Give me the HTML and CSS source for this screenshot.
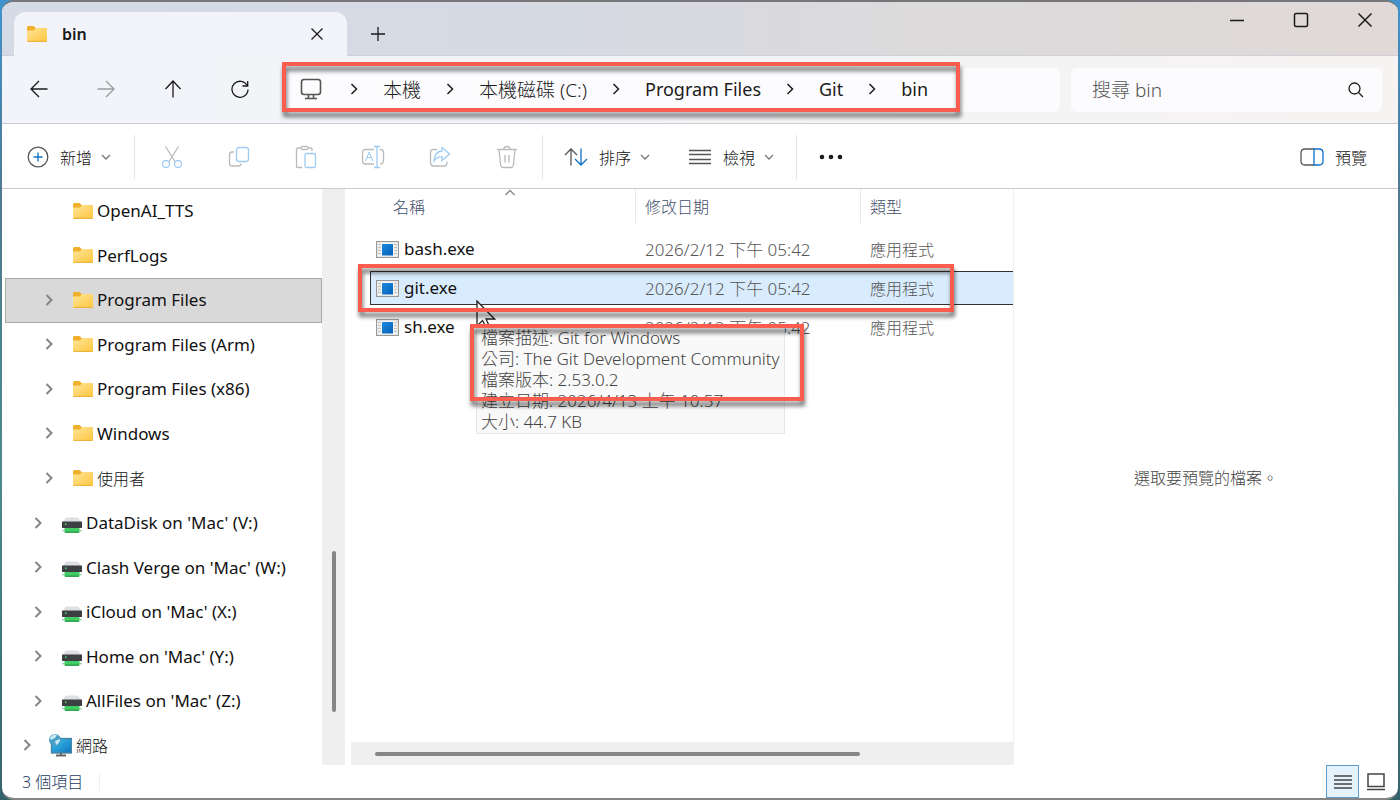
FILE: index.html
```html
<!DOCTYPE html>
<html lang="zh-Hant">
<head>
    <meta charset="UTF-8">
    <meta name="viewport" content="width=device-width, initial-scale=1.0">
    <title>bin</title>
    <link rel="stylesheet" href="styles.css">
</head>
<body>

    <svg class="sprite" aria-hidden="true">
        <defs>
            <linearGradient id="folderFill" x1="0" y1="0" x2="1" y2="1">
                <stop offset="0" stop-color="#ffe59a"/>
                <stop offset="1" stop-color="#fdc63f"/>
            </linearGradient>
            <linearGradient id="screenFill" x1="0" y1="0" x2="1" y2="1">
                <stop offset="0" stop-color="#3cc3ee"/>
                <stop offset="1" stop-color="#1273bd"/>
            </linearGradient>
            <linearGradient id="appFill" x1="0" y1="0" x2="1" y2="1">
                <stop offset="0" stop-color="#1b8ae0"/>
                <stop offset="1" stop-color="#0560b6"/>
            </linearGradient>
        </defs>
        <symbol id="folder" viewBox="0 0 20 16">
            <path d="M0 1.5Q0 0 1.5 0H6.5L9 2.2V6H0Z" fill="#f0b02c"/>
            <path d="M0 4.5H7L9 2H19Q20 2 20 3V15Q20 16 19 16H1Q0 16 0 15Z" fill="url(#folderFill)"/>
            <path d="M0.5 15.5H19.5" stroke="#eeb33a"/>
        </symbol>
        <symbol id="drive" viewBox="0 0 20 16">
            <path d="M4 0.5H16L19.5 5H0.5Z" fill="#dddfe2"/>
            <rect y="4.5" width="20" height="6.5" rx="0.6" fill="#3d3f42"/>
            <rect x="3" y="6.5" width="1.5" height="1.5" fill="#46e070"/>
            <path d="M0 13.7H20" stroke="#8fd8a5"/>
            <rect x="2.5" y="11" width="15" height="4.5" rx="0.5" fill="#42cc66"/>
            <path d="M3 15.2H17" stroke="#249a45"/>
        </symbol>
        <symbol id="app" viewBox="0 0 23 17">
            <rect x="0.5" y="0.5" width="22" height="16" fill="#f8f8f8" stroke="#989898"/>
            <path d="M2 3.5H5M2 6.5H5M2 9.5H5M2 12.5H5M18 3.5H21M18 6.5H21M18 9.5H21M18 12.5H21" stroke="#c4c4c4"/>
            <rect x="6" y="3" width="11" height="11.5" fill="url(#appFill)"/>
        </symbol>
        <symbol id="chevron" viewBox="0 0 10 12">
            <path d="M2.5 1L7.5 6L2.5 11"/>
        </symbol>
        <symbol id="down" viewBox="0 0 10 6">
            <path d="M1 1L5 5L9 1"/>
        </symbol>
    </svg>

    <div class="window">
        <header class="titlebar">
            <div class="tab">
                <svg class="folder-icon"><use href="#folder"/></svg>
                <span class="tab-title">bin</span>
                <button class="plain" aria-label="關閉索引標籤">
                    <svg class="line" width="14" height="14" viewBox="0 0 14 14"><path d="M1.5 1.5L12.5 12.5M12.5 1.5L1.5 12.5"/></svg>
                </button>
            </div>
            <button class="plain new-tab" aria-label="新增索引標籤">
                <svg class="line" width="16" height="16" viewBox="0 0 16 16"><path d="M8 1V15M1 8H15"/></svg>
            </button>
            <div class="window-buttons">
                <button class="plain" aria-label="最小化"><svg class="line" width="16" height="16" viewBox="0 0 16 16"><path d="M1 8.5H15"/></svg></button>
                <button class="plain" aria-label="最大化"><svg class="line" width="16" height="16" viewBox="0 0 16 16"><rect x="1.5" y="1.5" width="13" height="13" rx="1.5"/></svg></button>
                <button class="plain" aria-label="關閉"><svg class="line" width="16" height="16" viewBox="0 0 16 16"><path d="M1.5 1.5L14.5 14.5M14.5 1.5L1.5 14.5"/></svg></button>
            </div>
        </header>

        <div class="navbar">
            <div class="nav-buttons">
                <button class="plain" aria-label="上一頁"><svg class="line" width="18" height="18" viewBox="0 0 18 18"><path d="M17.5 9H1M9 1L1 9L9 17"/></svg></button>
                <button class="plain" aria-label="下一頁" disabled><svg class="line" width="18" height="18" viewBox="0 0 18 18"><path d="M0.5 9H17M9 1L17 9L9 17"/></svg></button>
                <button class="plain" aria-label="上移"><svg class="line" width="18" height="18" viewBox="0 0 18 18"><path d="M9 17.5V1M1.5 9L9 1L16.5 9"/></svg></button>
                <button class="plain" aria-label="重新整理"><svg class="line" width="18" height="18" viewBox="0 0 18 18"><path d="M16.2 5.8A8 8 0 1 0 17 9.5M16.7 1V6H11.5"/></svg></button>
            </div>
            <nav class="address">
                <svg class="pc" width="22" height="22" viewBox="0 0 22 22"><rect x="1.5" y="1.5" width="19" height="15" rx="2.5"/><path d="M8.5 17V20M13.5 17V20M5 20.5H17"/></svg>
                <svg class="sep"><use href="#chevron"/></svg>
                <a href="#" class="drive-name">本機</a>
                <svg class="sep"><use href="#chevron"/></svg>
                <a href="#" class="drive-name">本機磁碟 (C:)</a>
                <svg class="sep"><use href="#chevron"/></svg>
                <a href="#">Program Files</a>
                <svg class="sep"><use href="#chevron"/></svg>
                <a href="#">Git</a>
                <svg class="sep"><use href="#chevron"/></svg>
                <a href="#">bin</a>
                <div class="mark mark-path"></div>
            </nav>
            <div class="search">
                <input type="text" placeholder="搜尋 bin" aria-label="搜尋 bin">
                <svg class="line" width="16" height="16" viewBox="0 0 16 16"><circle cx="6.5" cy="6.5" r="5.5"/><path d="M10.5 10.5L15 15"/></svg>
            </div>
        </div>

        <div class="toolbar">
            <button class="tool tool-new">
                <svg width="22" height="22" viewBox="0 0 22 22"><circle class="gray" cx="11" cy="11" r="9.8"/><path class="blue" d="M11 6.5V15.5M6.5 11H15.5"/></svg>
                新增
                <svg class="down"><use href="#down"/></svg>
            </button>
            <div class="tool-group">
                <button class="plain" aria-label="剪下" disabled><svg width="22" height="24" viewBox="0 0 22 24"><path class="gray" d="M4.5 1.5L14 16.5M17.5 1.5L8 16.5"/><circle class="blue" cx="5" cy="19" r="3.5"/><circle class="blue" cx="17" cy="19" r="3.5"/></svg></button>
                <button class="plain" aria-label="複製" disabled><svg width="22" height="24" viewBox="0 0 22 24"><path class="gray" d="M6 7H4Q1.5 7 1.5 9.5V18.5Q1.5 21 4 21H10.5Q13 21 13 18.5"/><rect class="blue" x="8.5" y="2.5" width="12" height="14" rx="2.5"/></svg></button>
                <button class="plain" aria-label="貼上" disabled><svg width="22" height="24" viewBox="0 0 22 24"><path class="gray" d="M7 22.5H2.5Q1.5 22.5 1.5 21.5V4Q1.5 3 2.5 3H6M13 3H16Q17 3 17 4V6"/><rect class="gray" x="6" y="1.5" width="7" height="3" rx="1.5"/><rect class="blue" x="10" y="8.5" width="10.5" height="14" rx="1.5"/></svg></button>
                <button class="plain" aria-label="重新命名" disabled><svg width="24" height="24" viewBox="0 0 24 24"><path class="gray" d="M13 4.5H4.5Q1.5 4.5 1.5 7.5V16Q1.5 19 4.5 19H13M19 4.5Q22.5 4.5 22.5 8V15.5Q22.5 19 19 19"/><path class="blue" d="M13 1.5H19M16 1.5V22.5M13 22.5H19"/><text class="letter" x="4" y="16">A</text></svg></button>
                <button class="plain" aria-label="共用" disabled><svg width="22" height="24" viewBox="0 0 22 24"><path class="gray" d="M8 4.5H4.5Q1.5 4.5 1.5 7.5V18Q1.5 21 4.5 21H15Q18 21 18 18V16.5"/><path class="blue" d="M13 2.5L20.5 9L13 15.5V12Q8 11.5 5 16Q5.5 6.5 13 6Z"/></svg></button>
                <button class="plain" aria-label="刪除" disabled><svg width="22" height="24" viewBox="0 0 22 24"><path class="gray" d="M1 4.5H21M7.5 4.5Q8 1.5 11 1.5Q14 1.5 14.5 4.5M3 4.5L4.7 20.5Q5 22.5 7 22.5H15Q17 22.5 17.3 20.5L19 4.5M9 10V17.5M13 10V17.5"/></svg></button>
            </div>
            <div class="tool-group tool-text">
                <button class="tool">
                    <svg width="24" height="18" viewBox="0 0 24 18"><path class="gray" d="M7 17.5V1M1 7L7 1L13 7"/><path class="blue" d="M17 0.5V17M11 11L17 17L23 11"/></svg>
                    排序
                    <svg class="down"><use href="#down"/></svg>
                </button>
                <button class="tool">
                    <svg width="24" height="18" viewBox="0 0 24 18"><path class="gray" d="M1 2.5H23M1 6.5H23M1 11.5H23M1 15.5H23"/></svg>
                    檢視
                    <svg class="down"><use href="#down"/></svg>
                </button>
            </div>
            <button class="plain more" aria-label="查看更多"><svg width="24" height="6" viewBox="0 0 24 6"><circle cx="3" cy="3" r="2.3"/><circle cx="12" cy="3" r="2.3"/><circle cx="21" cy="3" r="2.3"/></svg></button>
            <button class="tool tool-preview">
                <svg width="24" height="18" viewBox="0 0 24 18"><path class="gray" d="M14 1H5Q1 1 1 5V13Q1 17 5 17H14"/><path class="blue" d="M14 1H19Q23 1 23 5V13Q23 17 19 17H14Z"/></svg>
                預覽
            </button>
        </div>

        <div class="content">
            <aside class="sidebar">
                <ul class="tree">
                    <li><a href="#" class="level-3 leaf"><svg class="arrow"><use href="#chevron"/></svg><svg class="folder-icon"><use href="#folder"/></svg>OpenAI_TTS</a></li>
                    <li><a href="#" class="level-3 leaf"><svg class="arrow"><use href="#chevron"/></svg><svg class="folder-icon"><use href="#folder"/></svg>PerfLogs</a></li>
                    <li><a href="#" class="level-3 selected"><svg class="arrow"><use href="#chevron"/></svg><svg class="folder-icon"><use href="#folder"/></svg>Program Files</a></li>
                    <li><a href="#" class="level-3"><svg class="arrow"><use href="#chevron"/></svg><svg class="folder-icon"><use href="#folder"/></svg>Program Files (Arm)</a></li>
                    <li><a href="#" class="level-3"><svg class="arrow"><use href="#chevron"/></svg><svg class="folder-icon"><use href="#folder"/></svg>Program Files (x86)</a></li>
                    <li><a href="#" class="level-3"><svg class="arrow"><use href="#chevron"/></svg><svg class="folder-icon"><use href="#folder"/></svg>Windows</a></li>
                    <li><a href="#" class="level-3 zh"><svg class="arrow"><use href="#chevron"/></svg><svg class="folder-icon"><use href="#folder"/></svg>使用者</a></li>
                    <li><a href="#" class="level-2"><svg class="arrow"><use href="#chevron"/></svg><svg class="drive-icon"><use href="#drive"/></svg>DataDisk on 'Mac' (V:)</a></li>
                    <li><a href="#" class="level-2"><svg class="arrow"><use href="#chevron"/></svg><svg class="drive-icon"><use href="#drive"/></svg>Clash Verge on 'Mac' (W:)</a></li>
                    <li><a href="#" class="level-2"><svg class="arrow"><use href="#chevron"/></svg><svg class="drive-icon"><use href="#drive"/></svg>iCloud on 'Mac' (X:)</a></li>
                    <li><a href="#" class="level-2"><svg class="arrow"><use href="#chevron"/></svg><svg class="drive-icon"><use href="#drive"/></svg>Home on 'Mac' (Y:)</a></li>
                    <li><a href="#" class="level-2"><svg class="arrow"><use href="#chevron"/></svg><svg class="drive-icon"><use href="#drive"/></svg>AllFiles on 'Mac' (Z:)</a></li>
                    <li><a href="#" class="level-1 zh"><svg class="arrow"><use href="#chevron"/></svg><svg width="24" height="24" viewBox="0 0 24 24"><rect x="3.5" y="5.5" width="20" height="14.5" fill="url(#screenFill)" stroke="#48839f"/><path d="M13 20V22.5M8 22.5H18" stroke="#666" stroke-width="2"/><circle cx="7" cy="7" r="6" fill="#4a9fc6"/><path d="M2 5Q5 0 9 2L7 5L3 7ZM7 8L12 6Q12 10 8 12Z" fill="#c9e8f2"/></svg>網路</a></li>
                </ul>
                <div class="scroll-y"><div class="thumb"></div></div>
            </aside>

            <main class="files">
                <table>
                    <thead>
                        <tr>
                            <th class="col-name">名稱<svg class="sort-mark" width="12" height="7" viewBox="0 0 12 7"><path d="M1.5 6L6 1.5L10.5 6"/></svg></th>
                            <th class="col-date">修改日期</th>
                            <th class="col-type">類型</th>
                        </tr>
                    </thead>
                    <tbody>
                        <tr>
                            <td class="name"><svg class="app-icon"><use href="#app"/></svg>bash.exe</td>
                            <td>2026/2/12 下午 05:42</td>
                            <td class="zh">應用程式</td>
                        </tr>
                        <tr class="active">
                            <td class="name"><svg class="app-icon"><use href="#app"/></svg>git.exe</td>
                            <td>2026/2/12 下午 05:42</td>
                            <td class="zh">應用程式</td>
                        </tr>
                        <tr>
                            <td class="name"><svg class="app-icon"><use href="#app"/></svg>sh.exe</td>
                            <td>2026/2/12 下午 05:42</td>
                            <td class="zh">應用程式</td>
                        </tr>
                    </tbody>
                </table>
                <svg class="cursor" width="20" height="30" viewBox="0 0 20 30"><path d="M1 1V26L6.5 20.5L10.5 28L13.5 26.5L10 19H18.5Z"/></svg>
                <div class="tooltip" role="tooltip">
                    <div>檔案描述: Git for Windows</div>
                    <div>公司: The Git Development Community</div>
                    <div>檔案版本: 2.53.0.2</div>
                    <div>建立日期: 2026/4/13 上午 10:57</div>
                    <div>大小: 44.7 KB</div>
                </div>
                <div class="mark mark-file"></div>
                <div class="mark mark-info"></div>
                <div class="scroll-x"><div class="thumb"></div></div>
            </main>

            <section class="preview">選取要預覽的檔案。</section>
        </div>

        <footer class="statusbar">
            <span class="count">3 個項目</span>
            <div class="view-buttons">
                <button class="plain on" aria-label="詳細資料"><svg width="18" height="16" viewBox="0 0 18 16"><path d="M0 2H18M0 6H18M0 10H18M0 14H18"/></svg></button>
                <button class="plain" aria-label="大圖示"><svg width="18" height="18" viewBox="0 0 18 18"><rect x="1" y="1" width="16" height="12.5"/><path d="M0 16.5H18"/></svg></button>
            </div>
        </footer>
    </div>

</body>
</html>
```
FILE: styles.css
```css
* {
    box-sizing: border-box;
}

body {
    margin: 0;
    height: 100vh;
    padding: 0 2px;
    font-family: "Noto Sans", "Noto Sans CJK TC", sans-serif;
    font-size: 16px;
    color: #1b1b1b;
    background: linear-gradient(#3f93cc 0, #4f7a90 25%, #4b8a8f 60%, #35636c 100%);
}

a {
    color: inherit;
    text-decoration: none;
}

svg {
    flex: none;
    fill: none;
    stroke-width: 1.3;
}

button {
    font: inherit;
    color: inherit;
    border: none;
    background: none;
    padding: 0;
}

.sprite {
    position: absolute;
    width: 0;
    height: 0;
}

.plain {
    display: flex;
    align-items: center;
    justify-content: center;
}

.line {
    stroke: #1b1b1b;
}

.gray {
    stroke: #555;
}

.blue {
    stroke: #0f6fc5;
}

.window {
    display: flex;
    flex-direction: column;
    height: 100%;
    border-top: 2px solid #77777b;
    border-bottom: 2px solid #858585;
    border-radius: 12px;
    overflow: hidden;
    background: #fff;
}

/* title bar */
.titlebar {
    display: flex;
    flex: none;
    height: 54px;
    padding-left: 12px;
    background: linear-gradient(90deg, #d4dbe7 0%, #d6dae3 40%, #dcdadb 65%, #e0d9d8 100%);
    border-bottom: 1px solid #cfd0d7;
}

.tab {
    display: flex;
    align-items: center;
    width: 333px;
    margin-top: 10px;
    margin-bottom: -1px;
    padding: 0 23px 0 13px;
    background: #f2f4f9;
    border-radius: 12px 12px 0 0;
}

.tab-title {
    flex: 1;
    padding-left: 15px;
    font-weight: 600;
}

.new-tab {
    width: 62px;
    padding-top: 10px;
}

.window-buttons {
    display: flex;
    margin-left: auto;
    padding-right: 1px;
    height: 36px;
}

.window-buttons button {
    width: 64px;
}

.window-buttons svg {
    stroke-width: 1.5;
}

.folder-icon {
    width: 20px;
    height: 16px;
}

/* navigation */
.navbar {
    display: flex;
    flex: none;
    align-items: center;
    gap: 11px;
    height: 68px;
    padding-right: 16px;
    background: linear-gradient(90deg, #f2f4f9 0%, #f3f4f8 40%, #f6f3f2 100%);
    border-bottom: 1px solid #cdcbd0;
}

.nav-buttons {
    display: flex;
    width: 271px;
    padding-left: 4px;
}

.nav-buttons button {
    width: 67px;
    height: 44px;
    padding-bottom: 2px;
}

.nav-buttons button:disabled {
    opacity: 0.4;
}

.address {
    display: flex;
    flex: 1;
    align-items: center;
    position: relative;
    height: 44px;
    padding: 0 0 2px 16px;
    background: #fcfbfd;
    border-radius: 6px;
    font-size: 18px;
    white-space: nowrap;
}

.address .drive-name {
    font-size: 19px;
    font-weight: 300;
}

.pc {
    margin-right: 3px;
    stroke: #555;
    stroke-width: 1.6;
}

.sep {
    width: 10px;
    height: 12px;
    margin: 0 24px;
    stroke: #1b1b1b;
    stroke-width: 1.5;
}

.search {
    display: flex;
    align-items: center;
    width: 311px;
    height: 44px;
    padding: 0 18px 0 21px;
    background: #fcfbfd;
    border-radius: 6px;
}

.search input {
    flex: 1;
    min-width: 0;
    padding: 0;
    border: none;
    outline: none;
    background: none;
    font: inherit;
    font-size: 19px;
    font-weight: 300;
}

.search input::placeholder {
    color: #555;
}

/* toolbar */
.toolbar {
    display: flex;
    flex: none;
    align-items: center;
    height: 65px;
    padding: 2px 31px 0 25px;
    border-bottom: 1px solid #cdc8ca;
}

.tool {
    display: flex;
    align-items: center;
    gap: 11px;
    white-space: nowrap;
    font-weight: 300;
    color: #111;
}

.down {
    width: 10px;
    height: 6px;
    stroke: #777;
}

.tool .down {
    margin-left: -2px;
}

.tool-new {
    width: 107px;
}

.tool-group {
    display: flex;
    align-items: center;
    height: 44px;
    padding: 0 2px 0 3px;
    border-left: 1px solid #e4e4e4;
    border-right: 1px solid #e4e4e4;
}

.tool-group .plain {
    width: 67px;
}

.tool-group .plain:disabled {
    opacity: 0.4;
}

.tool-group .plain .blue {
    stroke: #0d80de;
}

.letter {
    fill: #0d80de;
    font-size: 13px;
}

.tool-text {
    gap: 38px;
    padding: 0 22px 0 21px;
    border-left: none;
}

.more {
    width: 68px;
}

.more svg {
    fill: #1b1b1b;
}

.tool-preview {
    margin-left: auto;
}

/* folder tree */
.content {
    display: flex;
    flex: 1;
    min-height: 0;
}

.sidebar {
    display: flex;
    width: 343px;
    overflow: hidden;
}

.tree {
    display: grid;
    grid-auto-rows: 1fr;
    flex: 1;
    margin: 0 0 -3px 3px;
    padding: 0;
    list-style: none;
    font-size: 17px;
}

.tree a {
    display: flex;
    align-items: center;
    height: 100%;
    gap: 4px;
    padding-bottom: 1px;
    color: #111;
    border: 1px solid transparent;
}

.tree .selected {
    background: #d9d9d9;
    border-color: #a8a8a8;
}

.zh {
    font-size: 16px;
    font-weight: 300;
}

.arrow {
    width: 10px;
    height: 12px;
    margin-right: 15px;
    stroke: #858585;
    stroke-width: 2;
}

.leaf .arrow {
    visibility: hidden;
}

.level-1 {
    padding-left: 16px;
}

.level-1 .arrow {
    margin-right: 12px;
}

.level-2 {
    padding-left: 27px;
}

.level-3 {
    padding-left: 38px;
}

.drive-icon {
    width: 20px;
    height: 16px;
    margin-top: 4px;
}

.scroll-y {
    width: 23px;
    padding: 362px 9px 53px 10px;
    background: #efefef;
}

.thumb {
    background: #858585;
    border-radius: 2px;
}

.scroll-y .thumb {
    height: 100%;
}

/* file list */
.files {
    position: relative;
    display: flex;
    flex-direction: column;
    flex: 1;
    padding-left: 6px;
}

table {
    width: 100%;
    table-layout: fixed;
    border-spacing: 0;
    white-space: nowrap;
}

th {
    height: 34px;
    padding: 0 9px;
    text-align: left;
    font-weight: 300;
    color: #3f4f6b;
    border-right: 1px solid #e8e8e8;
}

.col-name {
    width: 285px;
    padding-left: 42px;
}

.col-date {
    width: 225px;
}

.col-type {
    border-right: none;
}

.sort-mark {
    position: absolute;
    top: 0;
    left: 159px;
    stroke: #888;
}

tbody::before {
    content: "";
    display: block;
    height: 7px;
}

td {
    height: 39px;
    padding: 0 9px 2px;
    font-weight: 300;
    color: #555;
}

td:not(.zh) {
    font-size: 17px;
}

.files .name {
    padding-left: 25px;
    font-weight: 400;
    color: #111;
}

.app-icon {
    width: 23px;
    height: 17px;
    margin-right: 5px;
    vertical-align: -3px;
}

.active {
    background: linear-gradient(#333 0 1px, #d9ecfd 1px 33px, #333 33px) right 2px / calc(100% - 20px) 34px no-repeat,
        linear-gradient(#333, #333) 19px 2px / 1px 34px no-repeat;
}

.cursor {
    position: absolute;
    top: 111px;
    left: 131px;
    fill: #fff;
    stroke: #222;
}

.tooltip {
    position: absolute;
    top: 137px;
    left: 131px;
    padding: 0 4px 1px;
    border: 1px solid #e8e8e8;
    background: #f9f9f9;
    color: #444;
    font-size: 17px;
    font-weight: 300;
    line-height: 21px;
    white-space: nowrap;
}

.mark {
    position: absolute;
    border: 4px solid #fa5c4e;
    filter: drop-shadow(1px 5px 2px rgba(0, 0, 0, 0.55));
    pointer-events: none;
}

.mark-path {
    top: -6px;
    left: -2px;
    width: 678px;
    height: 50px;
}

.mark-file {
    top: 75px;
    left: 13px;
    width: 596px;
    height: 48px;
}

.mark-info {
    top: 135px;
    left: 125px;
    width: 334px;
    height: 77px;
}

.scroll-x {
    margin-top: auto;
    padding: 10px 153px 9px 24px;
    background: #efefef;
}

.scroll-x .thumb {
    height: 4px;
}

.preview {
    display: flex;
    align-items: center;
    justify-content: center;
    width: 385px;
    border-left: 1px solid #f0f0f0;
    font-weight: 300;
    color: #444;
}

/* status bar */
.statusbar {
    display: flex;
    flex: none;
    align-items: center;
    height: 33px;
    padding: 0 6px 0 20px;
    font-weight: 300;
    color: #243c60;
}

.count {
    padding-right: 16px;
    border-right: 1px solid #eee;
    line-height: 18px;
}

.view-buttons {
    display: flex;
    margin-left: auto;
}

.view-buttons button {
    width: 33px;
    height: 33px;
    border: 1px solid transparent;
}

.view-buttons .on {
    background: #e3f2fc;
    border-color: #5d9cca;
}

.view-buttons svg {
    stroke: #444;
    stroke-width: 1.5;
}
```
